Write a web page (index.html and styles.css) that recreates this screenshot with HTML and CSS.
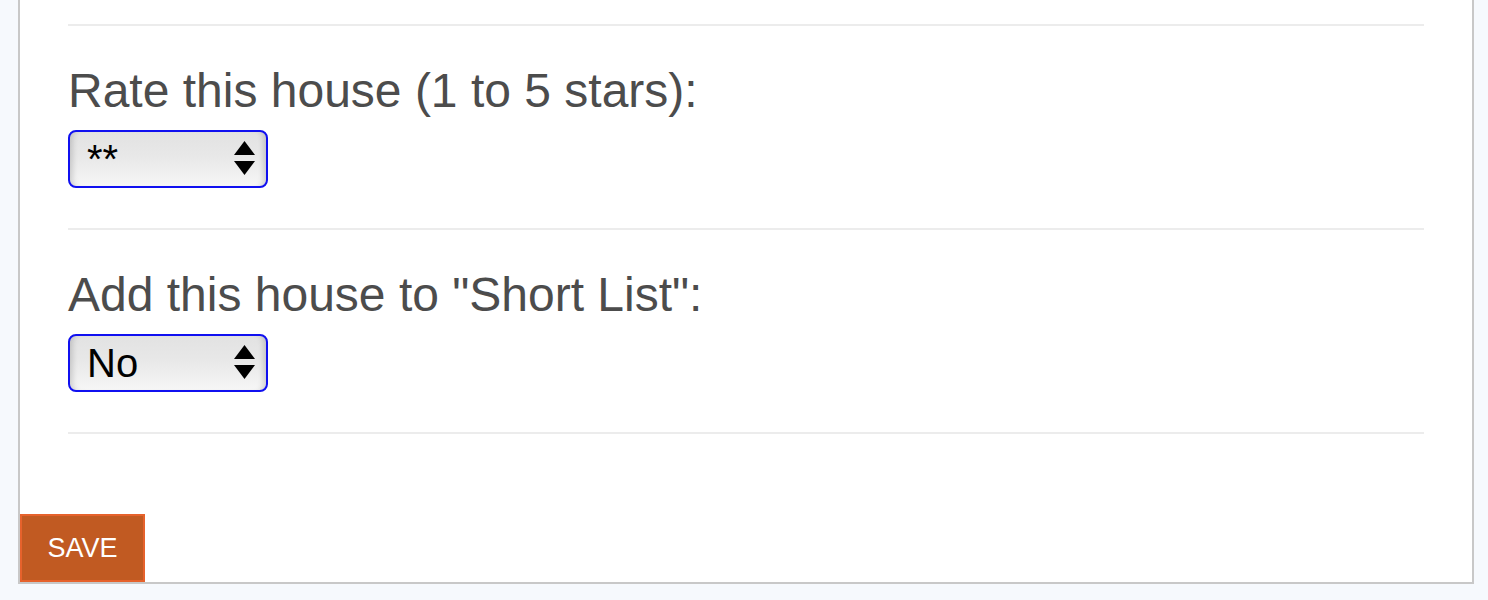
FILE: index.html
```html
<!DOCTYPE html>
<html lang="en">
<head>
<meta charset="utf-8">
<title>Rate house</title>
<link rel="stylesheet" href="styles.css">
</head>
<body>
<form class="card">
  <div class="card-body">
    <div class="divider"></div>
    <div class="field">
      <label class="field-label" for="rating">Rate this house (1 to 5 stars):</label>
      <span class="select-wrap">
        <select id="rating" class="select">
          <option>*</option>
          <option selected>**</option>
          <option>***</option>
          <option>****</option>
          <option>*****</option>
        </select>
        <svg class="select-arrows" width="21" height="35" viewBox="0 0 21 35" aria-hidden="true">
          <polygon points="10.5,0 21,14 0,14" fill="#000"/>
          <polygon points="0,20 21,20 10.5,34" fill="#000"/>
        </svg>
      </span>
    </div>
    <div class="divider"></div>
    <div class="field">
      <label class="field-label" for="shortlist">Add this house to "Short List":</label>
      <span class="select-wrap">
        <select id="shortlist" class="select">
          <option selected>No</option>
          <option>Yes</option>
        </select>
        <svg class="select-arrows" width="21" height="35" viewBox="0 0 21 35" aria-hidden="true">
          <polygon points="10.5,0 21,14 0,14" fill="#000"/>
          <polygon points="0,20 21,20 10.5,34" fill="#000"/>
        </svg>
      </span>
    </div>
    <div class="divider"></div>
  </div>
  <button type="button" class="save-btn">SAVE</button>
</form>
</body>
</html>
```
FILE: styles.css
```css
html, body {
  margin: 0;
  padding: 0;
}
body {
  background: #f6f9fd;
  font-family: "Liberation Sans", Arial, sans-serif;
  width: 1488px;
  height: 600px;
  overflow: hidden;
}
.card {
  display: flex;
  flex-direction: column;
  align-items: flex-start;
  margin: 0 14px 0 18px;
  background: #fff;
  border: 2px solid #c8c8c8;
  border-top: 0;
}
.card-body {
  align-self: stretch;
  padding: 24px 48px 0;
}
.divider {
  height: 2px;
  background: #ececec;
}
.field {
  display: flex;
  flex-direction: column;
  align-items: flex-start;
  padding: 38px 0 40px;
}
.field-label {
  font-size: 48px;
  line-height: 54px;
  color: #4c4c4c;
}
.select-wrap {
  position: relative;
  display: inline-block;
  margin-top: 12px;
}
.select {
  -webkit-appearance: none;
  appearance: none;
  display: block;
  box-sizing: border-box;
  width: 200px;
  height: 58px;
  margin: 0;
  padding: 0 40px 0 17px;
  border: 2px solid #1010f0;
  border-radius: 8px;
  background: linear-gradient(#e2e2e2, #e8e8e8 45%, #f6f6f6);
  box-shadow: inset 7px 0 6px -5px rgba(0,0,0,0.18), inset -7px 0 6px -5px rgba(0,0,0,0.18);
  font-family: "Liberation Sans", Arial, sans-serif;
  font-size: 40px;
  line-height: 54px;
  color: #000;
  outline: none;
}
.select-arrows {
  position: absolute;
  top: 11px;
  right: 13px;
  pointer-events: none;
}
.save-btn {
  margin-top: 80px;
  box-sizing: border-box;
  height: 68px;
  padding: 0 25.5px;
  background: #c15a22;
  border: 2px solid #e6622c;
  color: #fff;
  font-family: "Liberation Sans", Arial, sans-serif;
  font-size: 27px;
  line-height: 1;
  cursor: pointer;
}
```
